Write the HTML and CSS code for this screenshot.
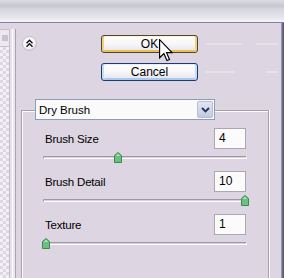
FILE: index.html
```html
<!DOCTYPE html>
<html>
<head>
<meta charset="utf-8">
<link rel="stylesheet" href="styles.css">
</head>
<body>
<div class="window">
  <div class="topbar"></div>
  <div class="main">
    <div class="sidebar">
      <div class="sb-col">
        <div class="sb-btn"><span class="sb-glyph"></span></div>
        <div class="sb-track"></div>
      </div>
      <div class="sb-stripes"></div>
    </div>
    <div class="content">
      <div class="actions">
        <button class="collapse" aria-label="Collapse">
          <svg width="15" height="15" viewBox="0 0 15 15">
            <defs>
              <radialGradient id="cg" cx="40%" cy="35%" r="70%">
                <stop offset="0" stop-color="#ffffff"/>
                <stop offset="0.7" stop-color="#f4f2f6"/>
                <stop offset="1" stop-color="#cfc8d6"/>
              </radialGradient>
            </defs>
            <circle cx="7.5" cy="7.5" r="7" fill="url(#cg)" stroke="#c4bccb" stroke-width="1"/>
            <path d="M4.5 7.2 L7.5 4.2 L10.5 7.2" fill="none" stroke="#111" stroke-width="1.4"/>
            <path d="M4.5 10.7 L7.5 7.7 L10.5 10.7" fill="none" stroke="#111" stroke-width="1.4"/>
          </svg>
        </button>
        <div class="btn-col">
          <div class="btn-row">
            <button class="btn btn-ok">OK</button>
            <span class="ghost ghost-a"></span>
            <span class="ghost ghost-b"></span>
          </div>
          <div class="btn-row">
            <button class="btn btn-cancel">Cancel</button>
            <span class="ghost ghost-c"></span>
            <span class="ghost ghost-d"></span>
          </div>
          <svg class="cursor" width="14" height="23" viewBox="0 0 12 19.5">
            <path d="M0.5 0.5 L0.5 16 L4.2 12.4 L6.8 18.4 L9 17.4 L6.5 11.6 L11.2 11.6 Z" fill="#fff" stroke="#000" stroke-width="1" stroke-linejoin="miter"/>
          </svg>
        </div>
      </div>

      <div class="group">
        <div class="combo">
          <span class="combo-text">Dry Brush</span>
          <span class="combo-btn">
            <svg width="9" height="6" viewBox="0 0 9 6">
              <path d="M1 1 L4.5 4.5 L8 1" fill="none" stroke="#27335a" stroke-width="1.8"/>
            </svg>
          </span>
        </div>

        <div class="param">
          <div class="param-head"><span class="label">Brush Size</span><span class="num">4</span></div>
          <div class="slider"><div class="track"></div><span class="thumb" style="left:71px"><svg width="8" height="11" viewBox="0 0 8 11"><path d="M4 0.5 L7.5 3.5 L7.5 10.5 L0.5 10.5 L0.5 3.5 Z" fill="#6cbf7e" stroke="#3f8a52" stroke-width="1"/><path d="M4 2 L6 3.8 L2 3.8 Z" fill="#c8f0d0"/></svg></span></div>
        </div>

        <div class="param">
          <div class="param-head"><span class="label">Brush Detail</span><span class="num">10</span></div>
          <div class="slider"><div class="track"></div><span class="thumb" style="left:198px"><svg width="8" height="11" viewBox="0 0 8 11"><path d="M4 0.5 L7.5 3.5 L7.5 10.5 L0.5 10.5 L0.5 3.5 Z" fill="#6cbf7e" stroke="#3f8a52" stroke-width="1"/><path d="M4 2 L6 3.8 L2 3.8 Z" fill="#c8f0d0"/></svg></span></div>
        </div>

        <div class="param">
          <div class="param-head"><span class="label">Texture</span><span class="num">1</span></div>
          <div class="slider"><div class="track"></div><span class="thumb" style="left:-1px"><svg width="8" height="11" viewBox="0 0 8 11"><path d="M4 0.5 L7.5 3.5 L7.5 10.5 L0.5 10.5 L0.5 3.5 Z" fill="#6cbf7e" stroke="#3f8a52" stroke-width="1"/><path d="M4 2 L6 3.8 L2 3.8 Z" fill="#c8f0d0"/></svg></span></div>
        </div>
      </div>
    </div>
    <div class="edge"></div>
  </div>
</div>
</body>
</html>
```

FILE: styles.css
```css
html, body {
  margin: 0;
  padding: 0;
}
body {
  width: 284px;
  height: 278px;
  overflow: hidden;
  font-family: "Liberation Sans", Arial, sans-serif;
  font-size: 11px;
  color: #000;
  background: #ddd5e1;
}
.window {
  display: flex;
  flex-direction: column;
  width: 284px;
  height: 278px;
}
.topbar {
  height: 22px;
  flex: none;
  border-bottom: 1px solid #86839a;
  background: linear-gradient(to bottom,
    #dcdce4 0, #d2d2dc 3px, #c6c6d2 6px, #d6d6e0 9px,
    #dfdfe7 14px, #e6e6ec 18px, #f1f1f5 20px, #f1f1f5 22px);
}
.main {
  flex: 1;
  display: flex;
  min-height: 0;
}

/* left sidebar strip */
.sidebar {
  width: 16px;
  flex: none;
  display: flex;
  margin-top: 6px;
}
.sb-col {
  width: 10px;
  display: flex;
  flex-direction: column;
  border-right: 1px solid #c2bcc8;
  box-sizing: border-box;
}
.sb-btn {
  height: 16px;
  flex: none;
  border-top: 1px solid #c6c0cc;
  border-bottom: 1px solid #c6c0cc;
  background: #ece8ef;
  display: flex;
  align-items: center;
  justify-content: center;
}
.sb-glyph {
  width: 6px;
  height: 6px;
  background: #c9c3cf;
}
.sb-track {
  flex: 1;
  background-color: #f3f1f5;
  background-image: conic-gradient(#dcd7e0 25%, transparent 0 50%, #dcd7e0 0 75%, transparent 0);
  background-size: 6px 6px;
}
.sb-stripes {
  width: 6px;
  background: linear-gradient(to right,
    #e7e2ea 0 2px, #ffffff 2px 3px, #ebe7ee 3px 5px, #aaa2b2 5px 6px);
}

/* right window edge */
.edge {
  width: 3px;
  flex: none;
  background: linear-gradient(to right, #9894ae 0 1px, #6e6b8a 1px 2px, #5c5a78 2px 3px);
}

/* main content */
.content {
  flex: 1;
  min-width: 0;
  display: flex;
  flex-direction: column;
}
.actions {
  display: flex;
  align-items: flex-start;
  padding-top: 12px;
}
.collapse {
  margin: 1px 0 0 6px;
  padding: 0;
  border: 0;
  background: none;
  width: 15px;
  height: 15px;
  display: block;
}
.collapse svg { display: block; }
.btn-col {
  position: relative;
  margin-left: 64px;
  display: flex;
  flex-direction: column;
  gap: 10px;
  flex: 1;
}
.btn-row {
  display: flex;
  align-items: center;
  height: 18px;
}
.btn {
  width: 97px;
  height: 18px;
  flex: none;
  padding: 0;
  box-sizing: border-box;
  border-radius: 3px;
  font-family: "Liberation Sans", Arial, sans-serif;
  font-size: 12px;
  color: #000;
  line-height: 14px;
  background: linear-gradient(to bottom, #ffffff 0, #f7f6f8 50%, #ebe8ee 85%, #dcd8e0 100%);
}
.btn-ok {
  border: 1px solid #4d4630;
  box-shadow: inset 2px 0 0 #eed27c, inset -2px 0 0 #eed27c,
              inset 0 -2px 0 #e8bf58, inset 0 1px 0 #fff4d2;
}
.btn-cancel {
  border: 1px solid #1f3a6c;
  box-shadow: inset 2px 0 0 #c4dcf6, inset -2px 0 0 #c4dcf6,
              inset 0 -2px 0 #a8c8ee, inset 0 1px 0 #e6f0fc;
}
.ghost {
  height: 2px;
  background: rgba(255, 255, 255, 0.28);
}
.ghost-a { width: 36px; margin-left: 8px; }
.ghost-b { width: 22px; margin-left: 14px; }
.ghost-c { width: 28px; margin-left: 8px; }
.ghost-d { width: 12px; margin-left: 32px; }
.cursor {
  position: absolute;
  left: 58px;
  top: 4px;
}

/* group box */
.group {
  margin: 29px 12px 0 5px;
  flex: 1;
  border: 1px solid #a79fae;
  border-bottom: 0;
  box-shadow: inset 1px 1px 0 #ffffff, 1px 0 0 #ffffff;
  padding: 0 22px 0 0;
  display: flex;
  flex-direction: column;
}
.combo {
  margin: -12px 0 0 13px;
  width: 180px;
  height: 21px;
  box-sizing: border-box;
  border: 1px solid #8c9cb8;
  background: #fafafa;
  display: flex;
  align-items: center;
  justify-content: space-between;
}
.combo-text {
  padding-left: 3px;
  font-size: 11.5px;
}
.combo-btn {
  width: 16px;
  height: 17px;
  margin-right: 1px;
  box-sizing: border-box;
  border: 1px solid #b7bfd6;
  border-radius: 2px;
  background: linear-gradient(to bottom, #e2e6f2, #c3c9de);
  display: flex;
  align-items: center;
  justify-content: center;
}
.combo-btn svg { display: block; }

.param {
  display: flex;
  flex-direction: column;
  margin-top: 8px;
}
.param-head {
  display: flex;
  align-items: center;
  justify-content: space-between;
  padding-left: 23px;
  height: 21px;
}
.label {
  font-size: 11.5px;
  letter-spacing: -0.2px;
}
.num {
  width: 32px;
  height: 21px;
  box-sizing: border-box;
  border: 1px solid #aca5b2;
  background: #fbfbfb;
  padding-left: 4px;
  font-size: 12px;
  line-height: 19px;
}
.slider {
  position: relative;
  height: 11px;
  margin: 3px -1px 0 21px;
}
.track {
  margin-top: 4px;
  height: 1px;
  border: 1px solid #9f97a7;
  border-right-color: #ffffff;
  border-bottom-color: #ffffff;
  border-radius: 2px;
  background: #d8d0dc;
}
.thumb {
  position: absolute;
  top: 0;
  width: 8px;
  height: 11px;
}
.thumb svg { display: block; }
```
